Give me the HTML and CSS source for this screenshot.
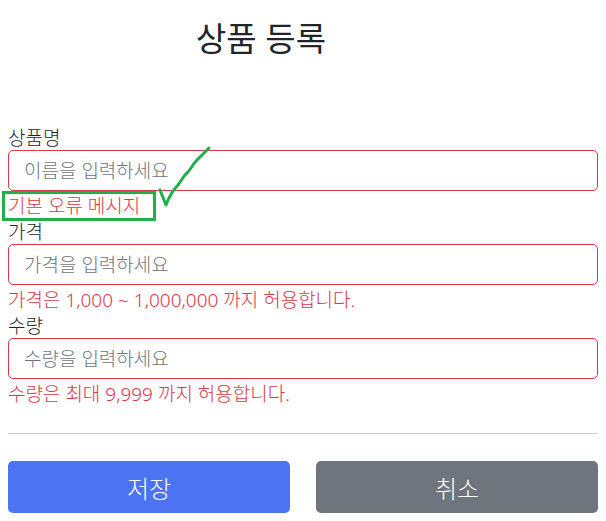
FILE: index.html
```html
<!DOCTYPE html>
<html lang="ko">
<head>
<meta charset="utf-8">
<title>상품 등록</title>
<link rel="stylesheet" href="styles.css">
</head>
<body>
<div class="container">
  <h2 class="title">상품 등록</h2>
  <form class="form">
    <div class="field">
      <label class="label" for="itemName">상품명</label>
      <input class="control invalid" id="itemName" placeholder="이름을 입력하세요">
      <div class="feedback annotated">기본 오류 메시지
        <span class="mark-box"></span>
        <svg class="check" width="64" height="70" viewBox="0 0 64 70">
          <path d="M10 50 L16 65 C19 57 23 50 28 45 C32 40 33 36 37 33 C41 29 43 24 47 20 C51 16 55 12 59 8" fill="none" stroke="#1fb04a" stroke-width="3" stroke-linecap="round" stroke-linejoin="round"/>
        </svg>
      </div>
    </div>
    <div class="field">
      <label class="label" for="price">가격</label>
      <input class="control invalid" id="price" placeholder="가격을 입력하세요">
      <div class="feedback">가격은 1,000 ~ 1,000,000 까지 허용합니다.</div>
    </div>
    <div class="field">
      <label class="label" for="quantity">수량</label>
      <input class="control invalid" id="quantity" placeholder="수량을 입력하세요">
      <div class="feedback">수량은 최대 9,999 까지 허용합니다.</div>
    </div>
    <hr class="divider">
    <div class="actions">
      <button type="button" class="btn btn-primary">저장</button>
      <button type="button" class="btn btn-secondary">취소</button>
    </div>
  </form>
</div>
</body>
</html>
```

FILE: styles.css
```css
* { box-sizing: border-box; }
html, body { margin: 0; padding: 0; background: #fff; }
body {
  font-family: "Noto Sans", "Noto Sans CJK KR", sans-serif;
  color: #212529;
  font-size: 16px;
  font-weight: 300;
}
.container {
  padding: 0 8px;
}
.title {
  margin: 0;
  padding: 15px 84px 0 0;
  height: 126px;
  text-align: center;
  font-weight: 400;
  font-size: 33px;
  line-height: 48px;
}
.field {
  display: flex;
  flex-direction: column;
}
.label {
  display: block;
  font-size: 19px;
  line-height: 24px;
}
.control {
  display: block;
  width: 100%;
  height: 41px;
  padding: 0 15px;
  font-family: inherit;
  font-weight: 300;
  font-size: 19px;
  color: #212529;
  background: #fff;
  border: 1px solid #ced4da;
  border-radius: 5px;
  outline: none;
}
.control.invalid { border-color: #dc3545; }
.control::placeholder { color: #6c757d; }
.feedback {
  margin-top: 2px;
  color: #dc3545;
  font-size: 19px;
  line-height: 27px;
}
.annotated { position: relative; }
.mark-box {
  position: absolute;
  left: -6px;
  top: -2px;
  width: 154px;
  height: 30px;
  border: 3px solid #1fb04a;
}
.check {
  position: absolute;
  left: 142px;
  top: -53px;
}
.divider {
  margin: 25px 0 27px;
  border: 0;
  border-top: 1px solid #c8c9ca;
}
.actions {
  display: grid;
  grid-template-columns: 1fr 1fr;
  column-gap: 26px;
}
.btn {
  height: 52px;
  border: 0;
  border-radius: 5px;
  color: #fff;
  font-family: inherit;
  font-weight: 300;
  font-size: 24px;
}
.btn-primary { background: #4b73f2; }
.btn-secondary { background: #6f757d; }
```
